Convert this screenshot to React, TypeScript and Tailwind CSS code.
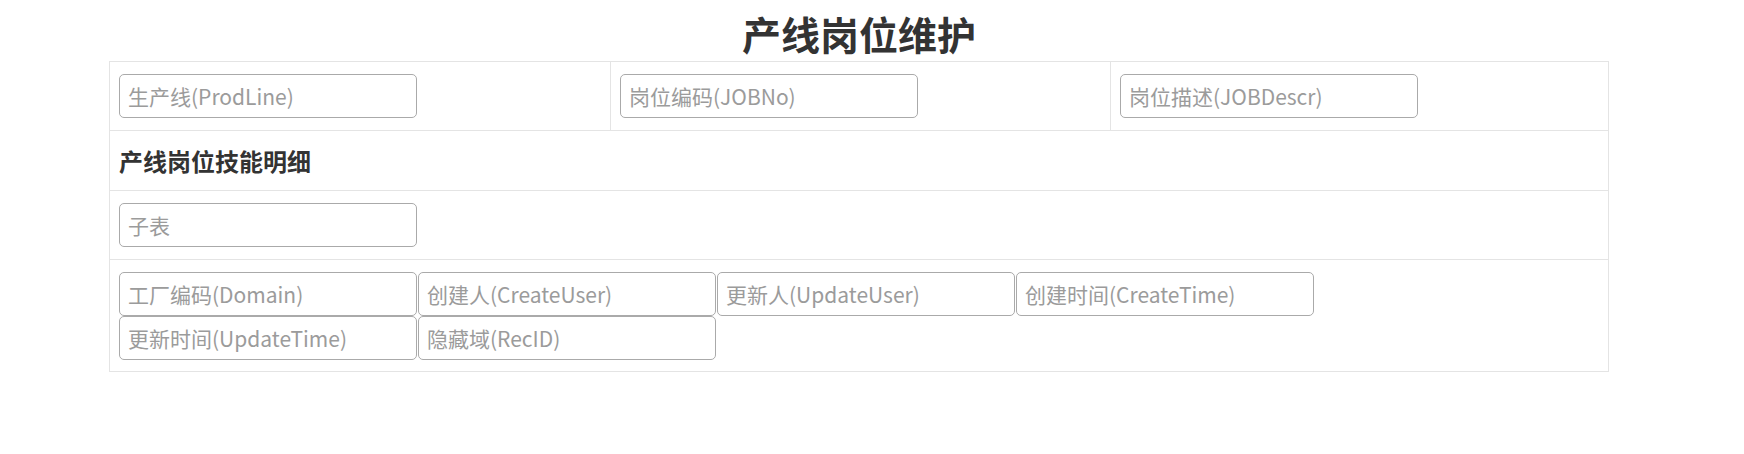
import React from "react";

const font = { fontFamily: '"Noto Sans CJK SC", "Noto Sans", sans-serif' };

function Field({ ph }: { ph: string }) {
  return (
    <input
      readOnly
      placeholder={ph}
      className="block w-[298px] h-[44px] border border-[#aaaaaa] rounded-[5px] pl-[8px] text-[21px] text-[#333] placeholder:text-[#9b9b9b] bg-white outline-none"
    />
  );
}

export default function App() {
  return (
    <div className="w-[1744px] h-[454px] bg-white" style={font}>
      <div className="ml-[109px] w-[1500px]">
        <h1 className="text-center text-[39px] font-bold text-[#333] leading-[55px] h-[61px] pt-[6px]">
          产线岗位维护
        </h1>
        <div className="border border-[#e4e4e4]">
          <div className="flex">
            <div className="w-[500px] pl-[9px] py-[12px]">
              <Field ph="生产线(ProdLine)" />
            </div>
            <div className="w-[500px] pl-[9px] py-[12px] border-l border-[#e4e4e4]">
              <Field ph="岗位编码(JOBNo)" />
            </div>
            <div className="flex-1 pl-[9px] py-[12px] border-l border-[#e4e4e4]">
              <Field ph="岗位描述(JOBDescr)" />
            </div>
          </div>
          <div className="border-t border-[#e4e4e4] h-[60px] flex items-center pl-[9px]">
            <span className="text-[24px] font-bold text-[#333]">产线岗位技能明细</span>
          </div>
          <div className="border-t border-[#e4e4e4] pl-[9px] py-[12px]">
            <Field ph="子表" />
          </div>
          <div className="border-t border-[#e4e4e4] pl-[9px] pt-[12px] pb-[11px]">
            <div className="flex flex-wrap w-[1200px] gap-x-[1px]">
              <Field ph="工厂编码(Domain)" />
              <Field ph="创建人(CreateUser)" />
              <Field ph="更新人(UpdateUser)" />
              <Field ph="创建时间(CreateTime)" />
              <Field ph="更新时间(UpdateTime)" />
              <Field ph="隐藏域(RecID)" />
            </div>
          </div>
        </div>
      </div>
    </div>
  );
}
